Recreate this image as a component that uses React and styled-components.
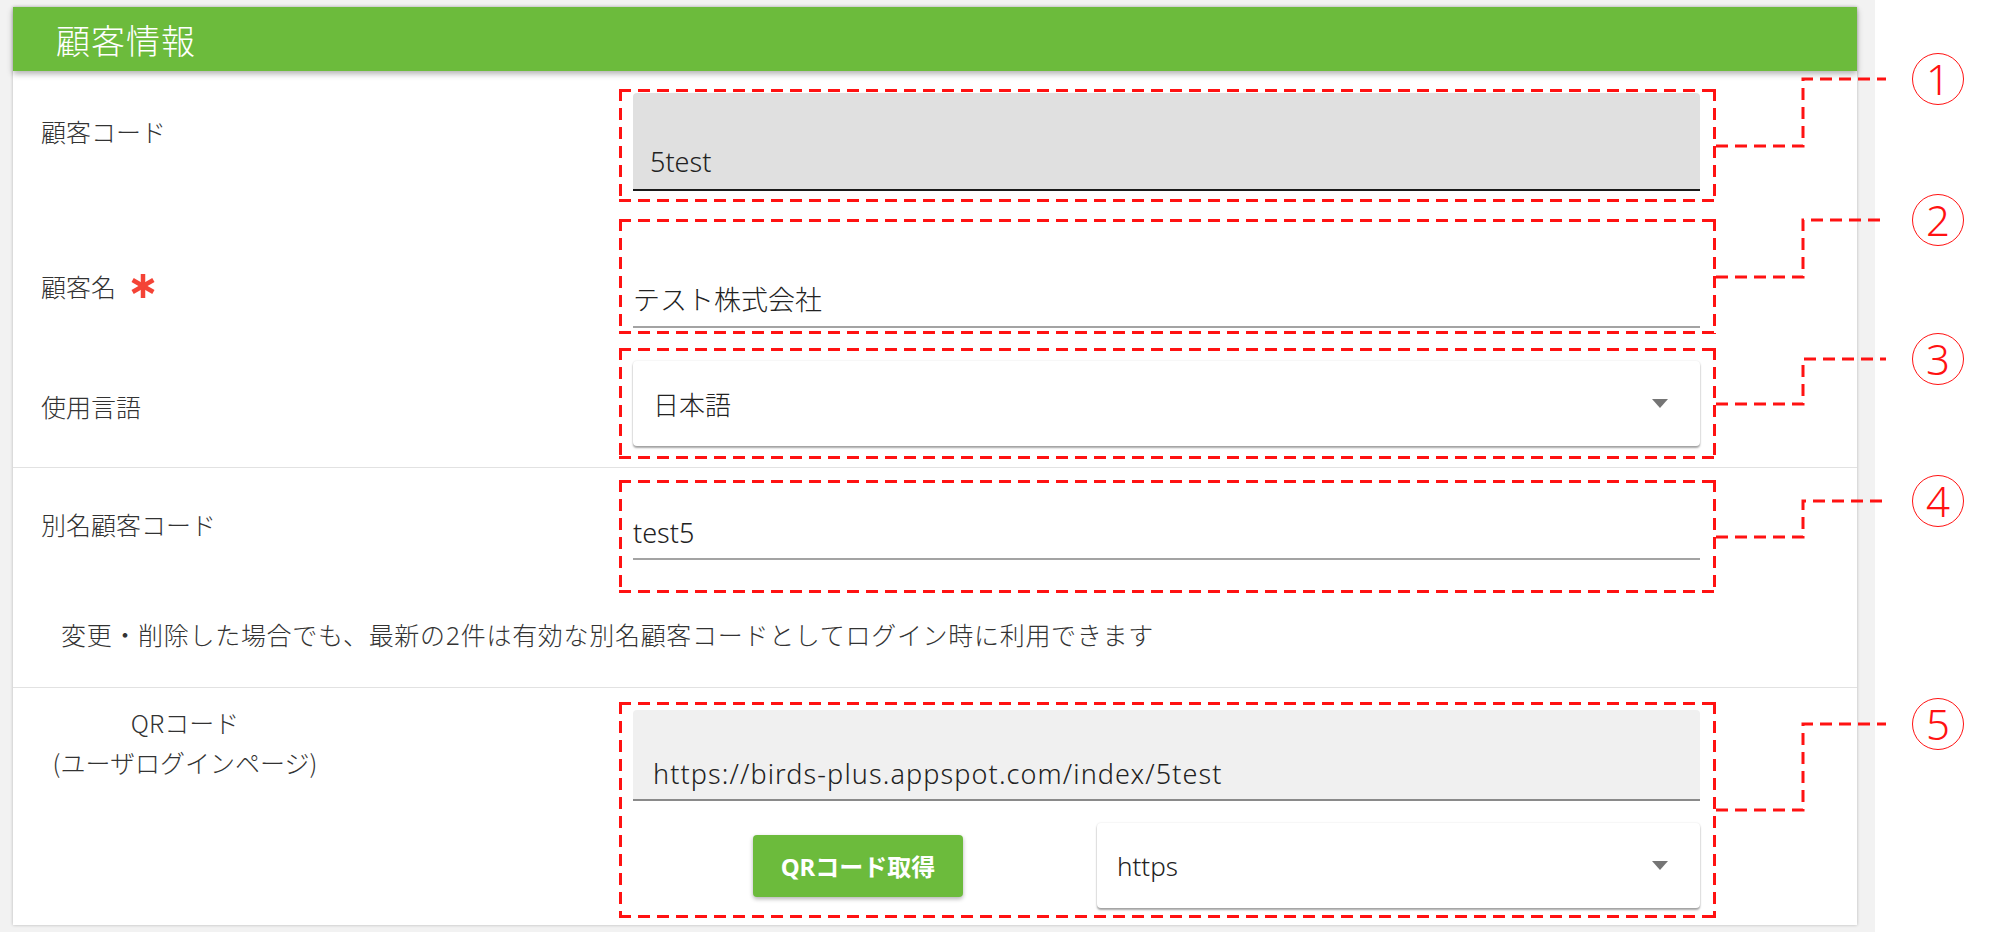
import React from 'react';
import styled, { createGlobalStyle } from 'styled-components';

const RED = '#ff1212';
const GREEN = '#6cbb3c';

const GlobalStyle = createGlobalStyle`
  html, body {
    margin: 0;
    background: #fff;
    overflow: hidden;
  }
  body {
    font-family: 'Noto Sans', 'Noto Sans CJK JP', sans-serif;
    color: #333;
  }
  * {
    box-sizing: border-box;
  }
`;

const annotations = {
  1: { mark: '1', rise: 67 },
  2: { mark: '2', rise: 57 },
  3: { mark: '3', rise: 45 },
  4: { mark: '4', rise: 36 },
  5: { mark: '5', rise: 86 },
};

function Marked({ n, pad, children }) {
  const { mark, rise } = annotations[n];
  return (
    <DashedBox $pad={pad}>
      {children}
      <Annotation>
        <Leader
          style={{ top: -rise - 2, height: rise + 4 }}
          viewBox={`0 0 172 ${rise + 4}`}
        >
          <path
            d={`M0 ${rise + 2} H87 V2 H170`}
            fill='none'
            stroke={RED}
            strokeWidth='3'
            strokeDasharray='12 7'
          />
        </Leader>
        <Badge style={{ top: -rise - 26 }}>{mark}</Badge>
      </Annotation>
    </DashedBox>
  );
}

function Asterisk() {
  return (
    <svg width='26' height='26' viewBox='0 0 26 26'>
      <g stroke='#f44336' strokeWidth='4.5'>
        <line x1='13' y1='1' x2='13' y2='25' />
        <line x1='2.6' y1='7' x2='23.4' y2='19' />
        <line x1='2.6' y1='19' x2='23.4' y2='7' />
      </g>
    </svg>
  );
}

export default function App() {
  return (
    <>
      <GlobalStyle />
      <Page>
        <Card>
          <Header>顧客情報</Header>

          <Section $top={18} $bottom={8}>
            <Row $mb={17}>
              <Label $offset={27}>顧客コード</Label>
              <Marked n={1} pad='1px 13px 8px 11px'>
                <TextField $h={98} $pb={12} $pl={17} $bg='#e0e0e0' $line='#1a1a1a'>
                  5test
                </TextField>
              </Marked>
            </Row>
            <Row $mb={14}>
              <Label $offset={52}>
                顧客名
                <Asterisk />
              </Label>
              <Marked n={2} pad='0 13px 3px 11px'>
                <TextField $h={106} $pb={11} $line='#a3a3a3'>
                  テスト株式会社
                </TextField>
              </Marked>
            </Row>
            <Row>
              <Label $offset={43}>使用言語</Label>
              <Marked n={3} pad='10px 13px 10px 11px'>
                <SelectBox>
                  <span>日本語</span>
                  <Caret />
                </SelectBox>
              </Marked>
            </Row>
          </Section>

          <Section $top={12} $bottom={37}>
            <Row>
              <Label $offset={29}>別名顧客コード</Label>
              <Marked n={4} pad='0 13px 30px 11px'>
                <TextField $h={77} $pb={10} $line='#a3a3a3'>
                  test5
                </TextField>
              </Marked>
            </Row>
            <Note>
              変更・削除した場合でも、最新の2件は有効な別名顧客コードとしてログイン時に利用できます
            </Note>
          </Section>

          <Section $top={14} $bottom={0} $last>
            <Row>
              <Label $offset={0}>
                <CenteredLabel>
                  QRコード
                  <br />
                  (ユーザログインページ)
                </CenteredLabel>
              </Label>
              <Marked n={5} pad='5px 13px 7px 11px'>
                <TextField $h={91} $pb={10} $pl={20} $bg='#f0f0f0' $line='#8a8a8a' $spacing={1.1}>
                  https://birds-plus.appspot.com/index/5test
                </TextField>
                <ActionRow>
                  <QrButton>QRコード取得</QrButton>
                  <SelectBox $w={603}>
                    <span>https</span>
                    <Caret />
                  </SelectBox>
                </ActionRow>
              </Marked>
            </Row>
          </Section>
        </Card>
      </Page>
    </>
  );
}

const Page = styled.div`
  width: 1875px;
  height: 932px;
  padding: 7px 18px 0 13px;
  background: #f2f2f2;
`;

const Card = styled.div`
  height: 918px;
  background: #fff;
  box-shadow: 0 0 3px rgba(0, 0, 0, 0.25);
`;

const Header = styled.h2`
  position: relative;
  z-index: 1;
  display: flex;
  align-items: center;
  height: 64px;
  margin: 0;
  padding-left: 43px;
  background: ${GREEN};
  color: #fff;
  font-family: 'Noto Sans CJK JP', sans-serif;
  font-size: 34px;
  font-weight: 300;
  letter-spacing: 1px;
  box-shadow: 0 3px 6px rgba(0, 0, 0, 0.3);
`;

const Section = styled.div`
  padding: ${props => props.$top}px 0 ${props => props.$bottom}px 28px;
  border-bottom: ${props => (props.$last ? 'none' : '1px solid #e2e2e2')};
`;

const Row = styled.div`
  display: flex;
  align-items: flex-start;
  margin-bottom: ${props => props.$mb || 0}px;
`;

const Label = styled.div`
  display: flex;
  align-items: center;
  gap: 14px;
  flex: none;
  width: 578px;
  padding-top: ${props => props.$offset}px;
  font-family: 'Noto Sans CJK JP', sans-serif;
  font-size: 25px;
  font-weight: 300;
  line-height: 30px;
  color: #333;
`;

const CenteredLabel = styled.div`
  width: 288px;
  text-align: center;
  line-height: 40px;
`;

const dashH = `repeating-linear-gradient(90deg, ${RED} 0 12px, transparent 12px 19px)`;
const dashV = `repeating-linear-gradient(180deg, ${RED} 0 12px, transparent 12px 19px)`;

const DashedBox = styled.div`
  position: relative;
  flex: none;
  width: 1097px;
  border: 3px solid transparent;
  padding: ${props => props.$pad};
  background:
    ${dashH} left top / 100% 3px no-repeat border-box,
    ${dashH} left bottom / 100% 3px no-repeat border-box,
    ${dashV} left top / 3px 100% no-repeat border-box,
    ${dashV} right top / 3px 100% no-repeat border-box;
`;

const Annotation = styled.div`
  position: absolute;
  left: calc(100% + 3px);
  top: 50%;
  width: 260px;
  height: 0;
`;

const Leader = styled.svg`
  position: absolute;
  left: 0;
  width: 172px;
  overflow: visible;
`;

const Badge = styled.div`
  position: absolute;
  left: 196px;
  display: flex;
  align-items: center;
  justify-content: center;
  width: 52px;
  height: 52px;
  border: 1.5px solid ${RED};
  border-radius: 50%;
  background: #fff;
  color: ${RED};
  font-family: 'Noto Sans', sans-serif;
  font-size: 42px;
  font-weight: 300;
  line-height: 1;
`;

const TextField = styled.div`
  display: flex;
  align-items: flex-end;
  height: ${props => props.$h}px;
  padding: 0 0 ${props => props.$pb}px ${props => props.$pl || 0}px;
  background: ${props => props.$bg || 'transparent'};
  border-bottom: 2px solid ${props => props.$line};
  border-radius: ${props => (props.$bg ? '4px 4px 0 0' : '0')};
  font-size: 27px;
  font-weight: 300;
  line-height: 30px;
  letter-spacing: ${props => props.$spacing || 0}px;
  color: #222;
`;

const SelectBox = styled.div`
  display: flex;
  align-items: center;
  justify-content: space-between;
  width: ${props => (props.$w ? `${props.$w}px` : '100%')};
  height: 85px;
  padding: 0 32px 0 20px;
  background: #fff;
  border-radius: 4px;
  box-shadow: 0 2px 2px rgba(0, 0, 0, 0.35), 0 0 2px rgba(0, 0, 0, 0.12);
  font-size: 26px;
  font-weight: 300;
  color: #222;
`;

const Caret = styled.span`
  width: 0;
  height: 0;
  border-left: 8px solid transparent;
  border-right: 8px solid transparent;
  border-top: 9px solid #757575;
`;

const ActionRow = styled.div`
  display: flex;
  align-items: center;
  gap: 134px;
  margin-top: 22px;
  padding-left: 120px;
`;

const QrButton = styled.button`
  width: 210px;
  height: 62px;
  border: none;
  border-radius: 4px;
  background: ${GREEN};
  color: #fff;
  font-family: 'Noto Sans', 'Noto Sans CJK JP', sans-serif;
  font-size: 24px;
  font-weight: 700;
  box-shadow: 0 2px 4px rgba(0, 0, 0, 0.3);
`;

const Note = styled.p`
  margin: 27px 0 0;
  padding-left: 20px;
  font-family: 'Noto Sans', 'Noto Sans CJK JP', sans-serif;
  font-size: 25px;
  font-weight: 300;
  line-height: 30px;
  letter-spacing: 0.7px;
  color: #333;
`;
